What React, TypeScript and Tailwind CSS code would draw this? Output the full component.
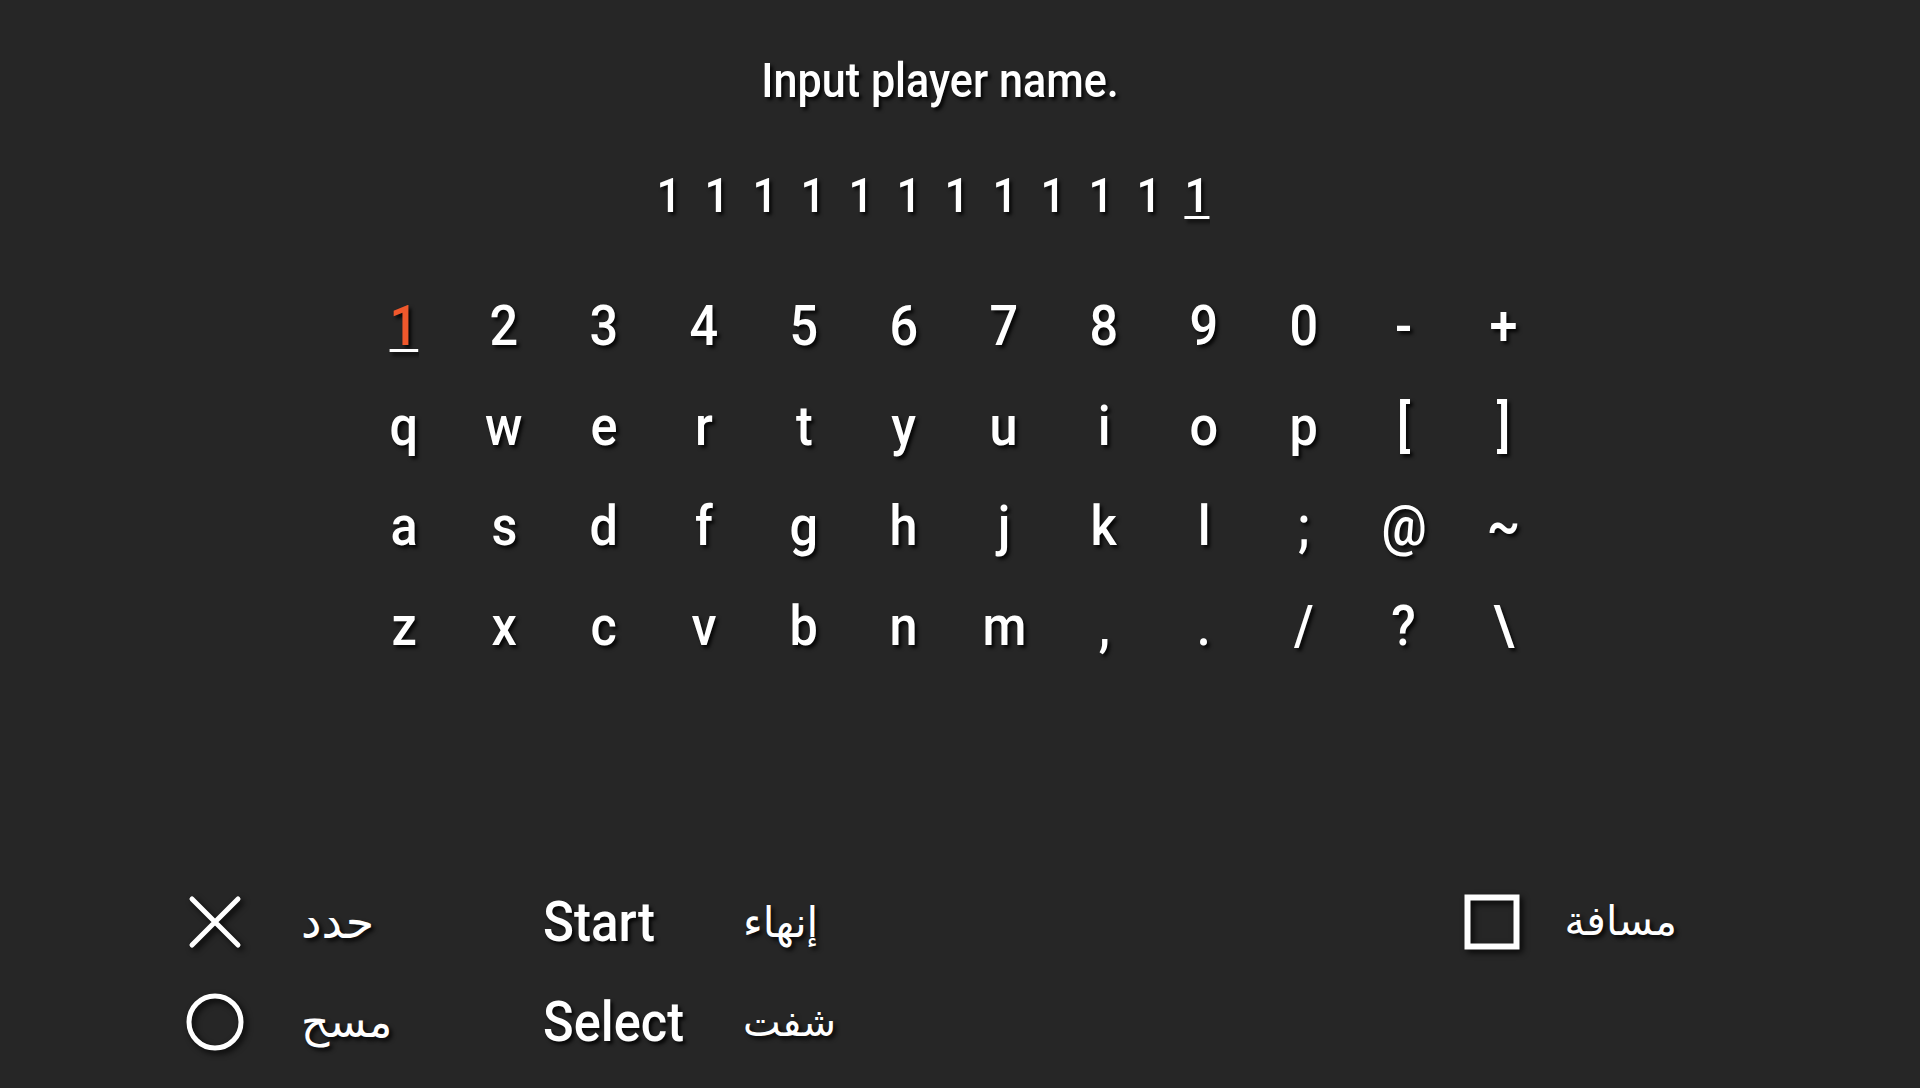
import React from 'react';

const keyRows = [
  ['1', '2', '3', '4', '5', '6', '7', '8', '9', '0', '-', '+'],
  ['q', 'w', 'e', 'r', 't', 'y', 'u', 'i', 'o', 'p', '[', ']'],
  ['a', 's', 'd', 'f', 'g', 'h', 'j', 'k', 'l', ';', '@', '~'],
  ['z', 'x', 'c', 'v', 'b', 'n', 'm', ',', '.', '/', '?', '\\'],
];

const nameChars = Array.from({ length: 12 }, () => '1');

const shadow = '[text-shadow:3px_3px_4px_rgba(0,0,0,0.85)]';
const arabic = "font-['DejaVu_Sans',sans-serif]";

function CrossIcon() {
  return (
    <svg viewBox="0 0 56 56" className="w-[56px] h-[56px] drop-shadow-[3px_3px_3px_rgba(0,0,0,0.85)]">
      <path d="M5 5 L51 51 M51 5 L5 51" stroke="#fff" strokeWidth={5} strokeLinecap="round" fill="none" />
    </svg>
  );
}

function CircleIcon() {
  return (
    <svg viewBox="0 0 60 60" className="w-[60px] h-[60px] drop-shadow-[3px_3px_3px_rgba(0,0,0,0.85)]">
      <circle cx="30" cy="30" r="26" stroke="#fff" strokeWidth={5} fill="none" />
    </svg>
  );
}

function SquareIcon() {
  return (
    <svg viewBox="0 0 56 56" className="w-[56px] h-[56px] drop-shadow-[3px_3px_3px_rgba(0,0,0,0.85)]">
      <rect x="3.5" y="3.5" width="49" height="49" stroke="#fff" strokeWidth={6} fill="none" />
    </svg>
  );
}

export default function App() {
  return (
    <div className="w-[1920px] h-[1088px] bg-[#262626] text-white overflow-hidden flex flex-col font-['Roboto','Liberation_Sans',sans-serif] font-medium">
      {/* Prompt */}
      <div className={`mt-[51px] h-[60px] leading-[60px] text-[49px] text-center pr-[40px] ${shadow}`}>
        <span className="inline-block scale-x-[0.88]">Input player name.</span>
      </div>

      {/* Entered name */}
      <div className={`mt-[55px] ml-[645px] flex h-[60px] leading-[60px] text-[49px] ${shadow}`}>
        {nameChars.map((c, i) => (
          <span key={i} className="w-[48px] flex justify-center">
            <span
              className={`inline-block scale-x-[0.9] ${i === nameChars.length - 1 ? 'underline decoration-[3px] underline-offset-[4px]' : ''}`}
            >
              {c}
            </span>
          </span>
        ))}
      </div>

      {/* Keyboard */}
      <div className={`mt-[50px] ml-[354px] flex flex-col text-[56px] ${shadow}`}>
        {keyRows.map((row, r) => (
          <div key={r} className="flex h-[100px] leading-[100px]">
            {row.map((k, c) => (
              <span key={c} className="w-[100px] flex justify-center">
                {r === 0 && c === 0 ? (
                  <span className="inline-block scale-x-[0.9] text-[#f0582c] underline decoration-white decoration-[3px] underline-offset-[4px]">{k}</span>
                ) : (
                  <span className="inline-block scale-x-[0.9]">{k}</span>
                )}
              </span>
            ))}
          </div>
        ))}
      </div>

      {/* Button legend */}
      <div className="mt-[196px] flex">
        <div className="flex flex-col">
          <div className="flex items-center h-[100px]">
            <div className="ml-[185px] w-[60px] flex justify-center"><CrossIcon /></div>
            <span className={`ml-[56px] w-[242px] text-[46px] font-normal ${arabic} ${shadow}`}>حدد</span>
            <span className={`w-[200px] text-[55px] ${shadow}`}>
              <span className="inline-block origin-left scale-x-[0.93]">Start</span>
            </span>
            <span className={`text-[42px] font-normal ${arabic} ${shadow}`}>إنهاء</span>
          </div>
          <div className="flex items-center h-[100px]">
            <div className="ml-[185px] w-[60px] flex justify-center"><CircleIcon /></div>
            <span className={`ml-[56px] w-[242px] text-[44px] font-normal ${arabic} ${shadow}`}>مسح</span>
            <span className={`w-[200px] text-[55px] ${shadow}`}>
              <span className="inline-block origin-left scale-x-[0.92]">Select</span>
            </span>
            <span className={`text-[40px] font-normal ${arabic} ${shadow}`}>شفت</span>
          </div>
        </div>
        <div className="ml-auto mr-[243px] flex items-center h-[100px]">
          <SquareIcon />
          <span className={`ml-[44px] text-[41px] font-normal ${arabic} ${shadow}`}>مسافة</span>
        </div>
      </div>
    </div>
  );
}
